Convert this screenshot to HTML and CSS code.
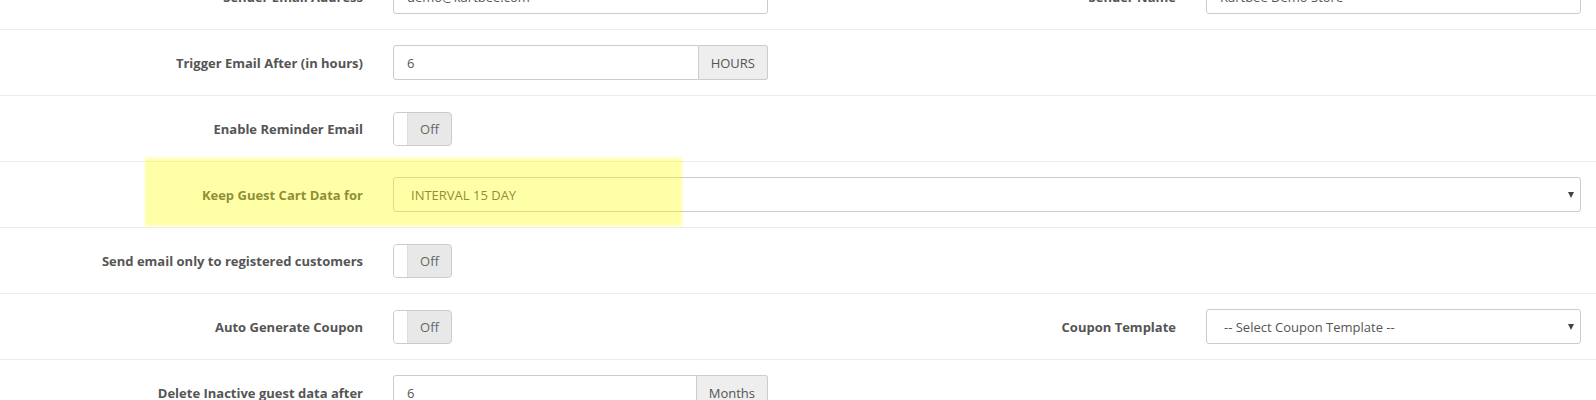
FILE: index.html
```html
<!DOCTYPE html>
<html lang="en">
  <head>
    <meta charset="UTF-8" />
    <title>Abandoned Cart Settings</title>
    <link rel="stylesheet" href="styles.css">
  </head>
  <body>
    <div class="form">
      <div class="form-row">
        <label class="col-label">Sender Email Address</label>
        <div class="col-input">
          <input class="form-control" type="text" value="demo@kartbee.com" />
        </div>
        <label class="col-label">Sender Name</label>
        <div class="col-input">
          <input class="form-control" type="text" value="Kartbee Demo Store" />
        </div>
      </div>
      <div class="form-row">
        <label class="col-label">Trigger Email After (in hours)</label>
        <div class="col-input">
          <div class="input-group">
            <input class="form-control" type="text" value="6" />
            <span class="addon">HOURS</span>
          </div>
        </div>
      </div>
      <div class="form-row">
        <label class="col-label">Enable Reminder Email</label>
        <div class="col-input">
          <span class="switch"><span class="knob"></span><span class="switch-text">Off</span></span>
        </div>
      </div>
      <div class="form-row">
        <label class="col-label">Keep Guest Cart Data for</label>
        <div class="col-input col-wide">
          <div class="select-wrap">
            <select class="form-control">
              <option>INTERVAL 15 DAY</option>
            </select>
          </div>
        </div>
      </div>
      <div class="form-row">
        <label class="col-label">Send email only to registered customers</label>
        <div class="col-input">
          <span class="switch"><span class="knob"></span><span class="switch-text">Off</span></span>
        </div>
      </div>
      <div class="form-row">
        <label class="col-label">Auto Generate Coupon</label>
        <div class="col-input">
          <span class="switch"><span class="knob"></span><span class="switch-text">Off</span></span>
        </div>
        <label class="col-label">Coupon Template</label>
        <div class="col-input">
          <div class="select-wrap">
            <select class="form-control">
              <option>-- Select Coupon Template --</option>
            </select>
          </div>
        </div>
      </div>
      <div class="form-row">
        <label class="col-label">Delete Inactive guest data after</label>
        <div class="col-input">
          <div class="input-group">
            <input class="form-control" type="text" value="6" />
            <span class="addon">Months</span>
          </div>
        </div>
      </div>
    </div>
    <div class="highlight"></div>
  </body>
</html>
```

FILE: styles.css
```css
body {
  margin: 0;
  font-family: 'Open Sans', 'Liberation Sans', sans-serif;
  font-size: 13px;
  color: #555;
  background: #fff;
}
.form {
  margin-top: -37px;
}
.form-row {
  display: grid;
  grid-template-columns: 378px 405px 1fr 405px;
  grid-auto-rows: 35px;
  align-items: center;
  border-top: 1px solid #ededed;
  padding: 15px 0;
}
.col-label {
  padding: 0 15px;
  text-align: right;
  font-weight: 700;
  color: #555;
}
.col-input {
  padding: 0 15px;
}
.col-wide {
  grid-column: 2 / -1;
}
.form-control {
  display: block;
  width: 100%;
  height: 35px;
  padding: 0 13px;
  border: 1px solid #ccc;
  border-radius: 3px;
  box-sizing: border-box;
  font-family: inherit;
  font-size: 13px;
  color: #555;
  background: #fff;
  outline: none;
}
.input-group {
  display: flex;
}
.input-group .form-control {
  flex: 1;
  border-radius: 3px 0 0 3px;
}
.addon {
  display: flex;
  align-items: center;
  padding: 0 12px;
  border: 1px solid #ccc;
  border-left: none;
  border-radius: 0 3px 3px 0;
  background: #eee;
  color: #555;
}
.switch {
  display: flex;
  width: 59px;
  height: 34px;
  border: 1px solid #ccc;
  border-radius: 4px;
  box-sizing: border-box;
  overflow: hidden;
  background: #e8e8e8;
}
.knob {
  width: 13px;
  background: #fff;
  border-right: 1px solid #ddd;
}
.switch-text {
  flex: 1;
  display: flex;
  align-items: center;
  justify-content: center;
  color: #666;
}
.select-wrap {
  position: relative;
}
.select-wrap select {
  -webkit-appearance: none;
  appearance: none;
  padding-left: 17px;
}
.select-wrap::after {
  content: "";
  position: absolute;
  right: 7px;
  top: 15px;
  border-left: 3.5px solid transparent;
  border-right: 3.5px solid transparent;
  border-top: 6px solid #444;
}
.highlight {
  position: absolute;
  left: 145px;
  top: 158px;
  width: 537px;
  height: 68px;
  background: rgba(255, 255, 0, 0.34);
  filter: blur(1px);
}
```
